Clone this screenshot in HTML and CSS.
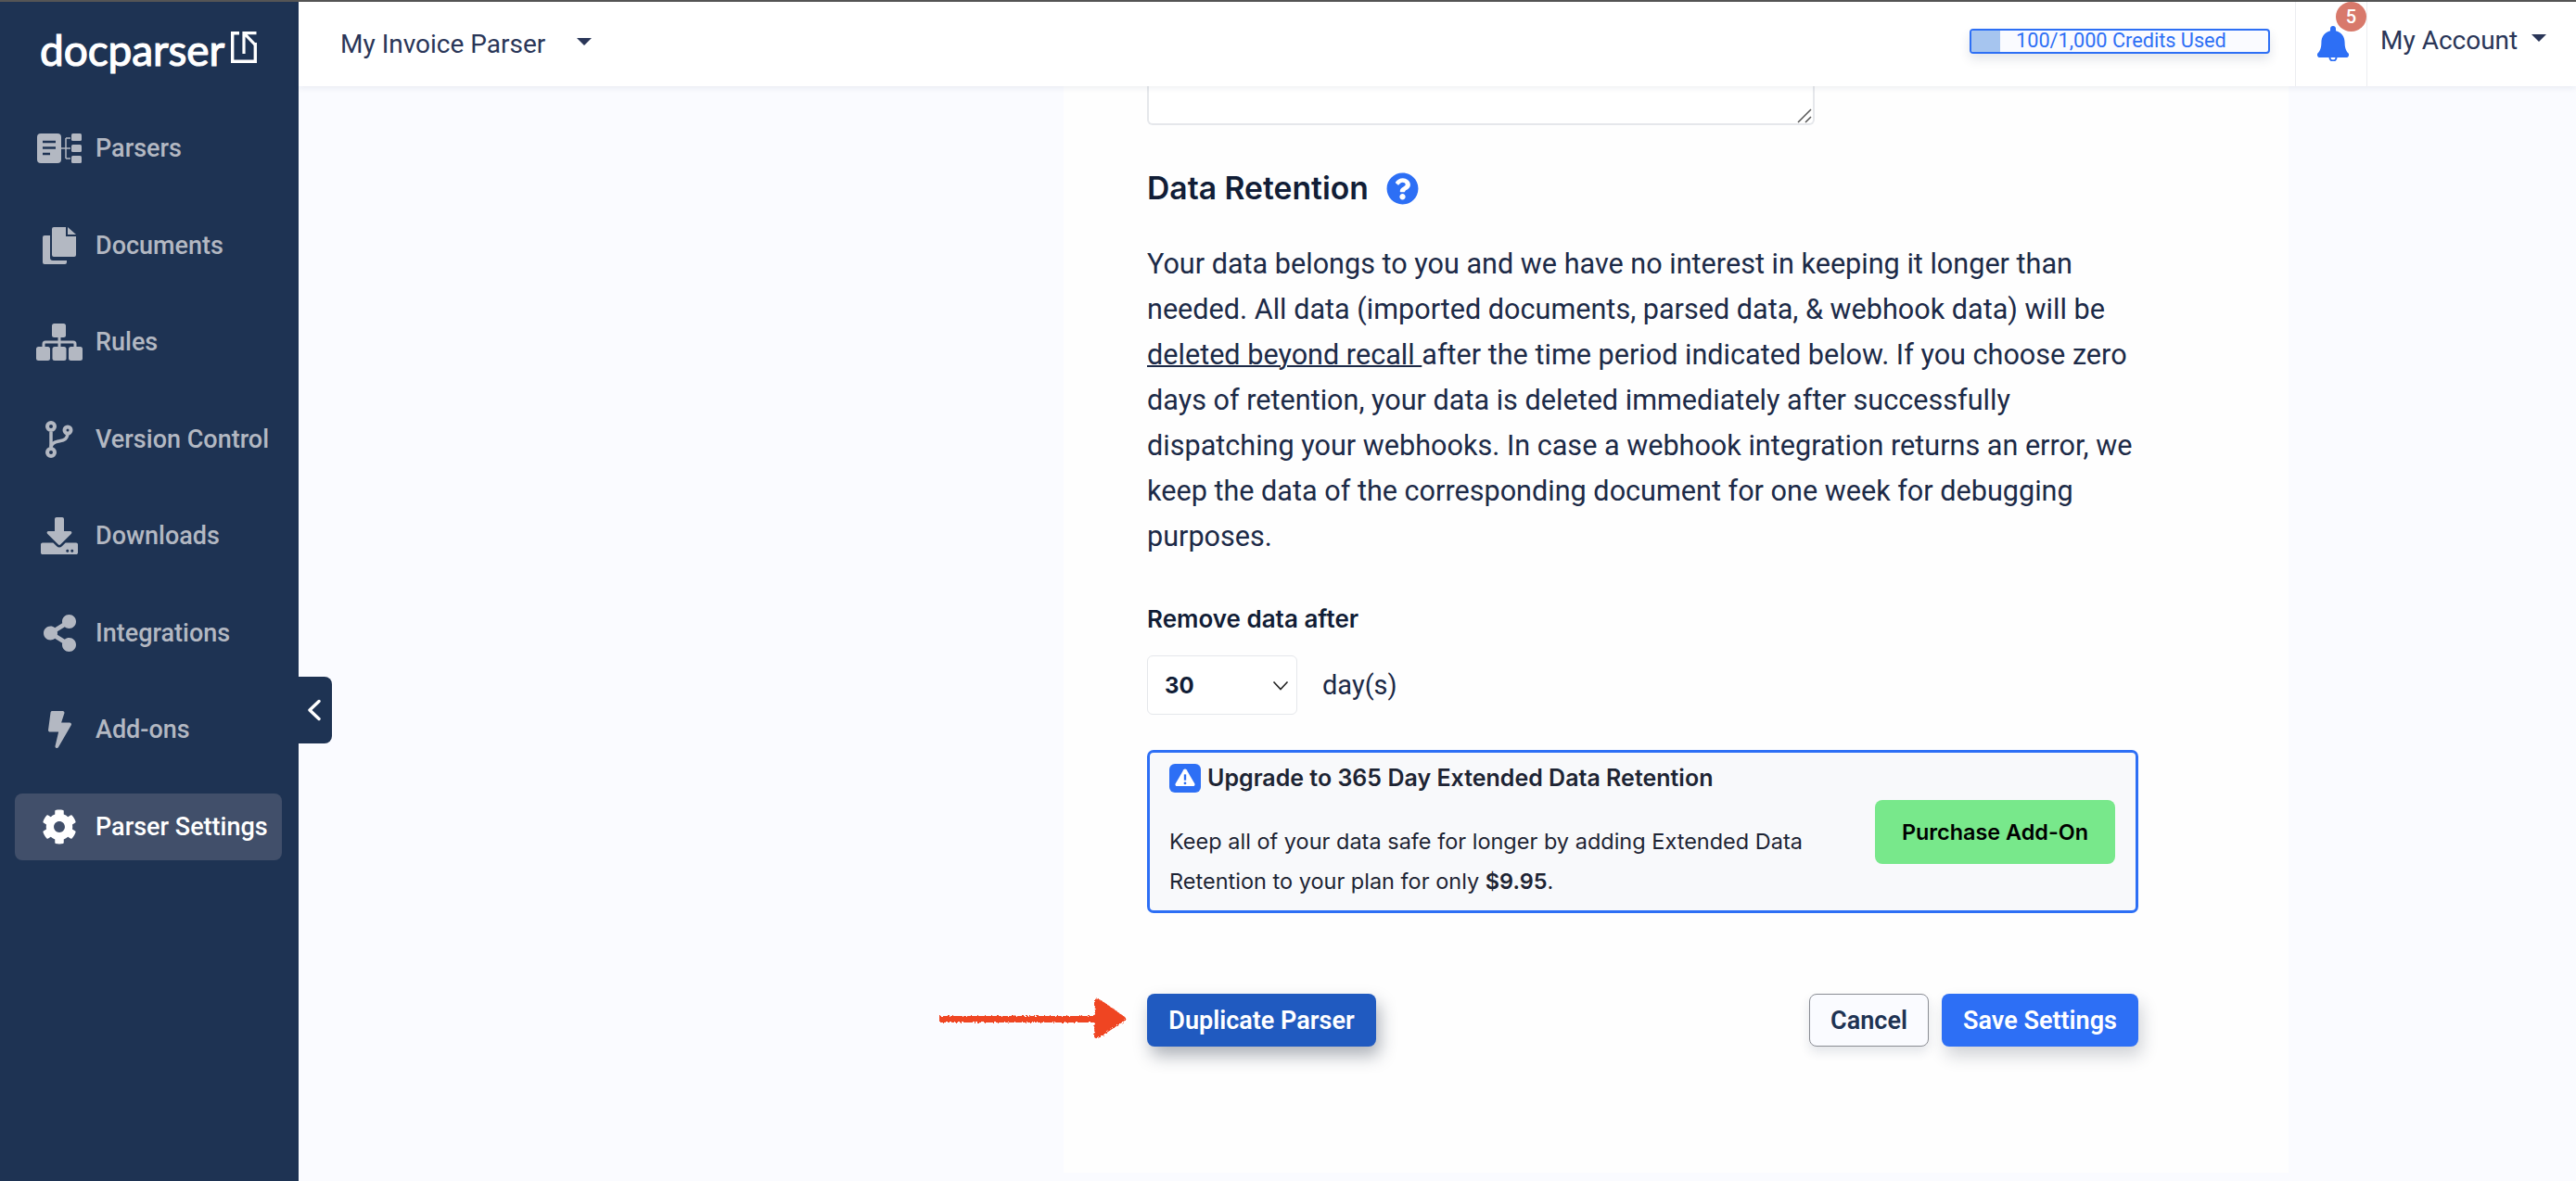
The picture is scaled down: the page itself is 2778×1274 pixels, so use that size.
FILE: index.html
```html
<!DOCTYPE html>
<html lang="en">
<head>
<meta charset="utf-8">
<title>Docparser - Parser Settings</title>
<link rel="stylesheet" href="styles.css">
</head>
<body>
<div class="app">
  <aside class="sidebar">
    <div class="logo">
      <span class="logo-text">docparser</span>
      <svg class="logo-mark" viewBox="0 0 28 34" width="28" height="34"><path d="M9 1.700H1.700v30.600h24.600V12" fill="none" stroke="#fff" stroke-width="3.400"/><path d="M14 24V1.700H27.500M14 1.700 26.800 15" fill="none" stroke="#fff" stroke-width="3.200"/></svg>
    </div>
    <nav class="nav">
      <a class="nav-item"><span class="nav-icon"><svg viewBox="0 0 48 32" width="48" height="32"><rect width="26" height="32" rx="4" fill="currentColor"/><path d="M6 9h14M6 15.500h14M6 22h8" stroke="#1e3353" stroke-width="2.600"/><path d="M26 16h5M31 5v22M31 5h5M31 16h5M31 27h5" stroke="currentColor" stroke-width="1.500" fill="none"/><rect x="37" width="11" height="8" rx="1.500" fill="currentColor"/><rect x="37" y="12" width="11" height="8" rx="1.500" fill="currentColor"/><rect x="37" y="24" width="11" height="8" rx="1.500" fill="currentColor"/></svg></span><span>Parsers</span></a>
      <a class="nav-item"><span class="nav-icon"><svg viewBox="0 0 36 40" width="36" height="40"><path d="M12 0h13v10h11v20a2 2 0 0 1-2 2H12a2 2 0 0 1-2-2V2a2 2 0 0 1 2-2zM27 0l9 8h-9z" fill="currentColor"/><path d="M8 9v24a3 3 0 0 0 3 3h15v2a2 2 0 0 1-2 2H2a2 2 0 0 1-2-2V11a2 2 0 0 1 2-2z" fill="currentColor"/></svg></span><span>Documents</span></a>
      <a class="nav-item"><span class="nav-icon"><svg viewBox="0 0 50 40" width="50" height="40"><rect x="17" width="15" height="15" rx="2.500" fill="currentColor"/><rect y="25" width="15" height="15" rx="2.500" fill="currentColor"/><rect x="17.500" y="25" width="15" height="15" rx="2.500" fill="currentColor"/><rect x="35" y="25" width="15" height="15" rx="2.500" fill="currentColor"/><path d="M25 15v10M8 25v-3a2 2 0 0 1 2-2h30a2 2 0 0 1 2 2v3" fill="none" stroke="currentColor" stroke-width="3"/></svg></span><span>Rules</span></a>
      <a class="nav-item"><span class="nav-icon"><svg viewBox="0 0 30 40" width="30" height="40"><path d="M6 12v16" stroke="currentColor" stroke-width="3.500"/><path d="M24 12c0 9-5 9-10 10-5 1-8 3-8 7" fill="none" stroke="currentColor" stroke-width="3.500"/><circle cx="6" cy="6" r="4" fill="#1e3353" stroke="currentColor" stroke-width="4"/><circle cx="24" cy="10" r="3.500" fill="#1e3353" stroke="currentColor" stroke-width="4"/><circle cx="6" cy="34" r="4" fill="#1e3353" stroke="currentColor" stroke-width="4"/></svg></span><span>Version Control</span></a>
      <a class="nav-item"><span class="nav-icon"><svg viewBox="0 0 512 512" width="40" height="40"><path fill="currentColor" d="M216 0h80c13.300 0 24 10.700 24 24v168h87.700c17.800 0 26.700 21.500 14.100 34.100L269.700 378.300c-7.500 7.500-19.800 7.500-27.300 0L90.100 226.100c-12.600-12.600-3.700-34.100 14.100-34.100H192V24c0-13.300 10.700-24 24-24zm296 376v112c0 13.300-10.700 24-24 24H24c-13.300 0-24-10.700-24-24V376c0-13.300 10.700-24 24-24h146.700l49 49c20.100 20.100 52.500 20.100 72.600 0l49-49H488c13.300 0 24 10.700 24 24zm-124 88c0-11-9-20-20-20s-20 9-20 20 9 20 20 20 20-9 20-20zm64 0c0-11-9-20-20-20s-20 9-20 20 9 20 20 20 20-9 20-20z"/></svg></span><span>Downloads</span></a>
      <a class="nav-item"><span class="nav-icon"><svg viewBox="0 0 448 512" width="35" height="40"><path fill="currentColor" d="M352 320c-22.608 0-43.387 7.819-59.790 20.895l-102.486-64.054a96.551 96.551 0 0 0 0-41.683l102.486-64.054C308.613 184.181 329.392 192 352 192c53.019 0 96-42.981 96-96S405.019 0 352 0s-96 42.981-96 96c0 7.158.79 14.130 2.276 20.841L155.790 180.895C139.387 167.819 118.608 160 96 160c-53.019 0-96 42.981-96 96s42.981 96 96 96c22.608 0 43.387-7.819 59.790-20.895l102.486 64.054A96.301 96.301 0 0 0 256 416c0 53.019 42.981 96 96 96s96-42.981 96-96-42.981-96-96-96z"/></svg></span><span>Integrations</span></a>
      <a class="nav-item"><span class="nav-icon"><svg viewBox="0 0 320 512" width="25" height="40"><path fill="currentColor" d="M296 160H180.600l42.600-129.800C227.200 15 215.700 0 200 0H56C44 0 33.800 8.900 32.200 20.800l-32 240C-1.700 275.200 9.500 288 24 288h118.700L96.600 482.500c-3.600 15.200 8 29.500 23.300 29.500 8.400 0 16.400-4.400 20.800-12l176-304c9.300-15.900-2.200-36-20.700-36z"/></svg></span><span>Add-ons</span></a>
      <a class="nav-item active"><span class="nav-icon"><svg viewBox="0 0 512 512" width="38" height="38"><path fill="currentColor" d="M487.400 315.700l-42.600-24.600c4.300-23.200 4.300-47 0-70.200l42.600-24.600c4.900-2.800 7.100-8.600 5.500-14-11.100-35.600-30-67.800-54.700-94.600-3.800-4.100-10-5.100-14.800-2.300L380.800 110c-17.900-15.400-38.500-27.300-60.800-35.100V25.800c0-5.600-3.900-10.500-9.400-11.700-36.700-8.200-74.300-7.800-109.200 0-5.500 1.200-9.400 6.100-9.400 11.700V75c-22.200 7.900-42.800 19.800-60.800 35.100L88.700 85.500c-4.900-2.800-11-1.900-14.800 2.300-24.700 26.700-43.600 58.900-54.700 94.600-1.700 5.400.6 11.200 5.500 14L67.300 221c-4.300 23.200-4.300 47 0 70.200l-42.600 24.600c-4.900 2.800-7.100 8.600-5.500 14 11.100 35.600 30 67.800 54.700 94.600 3.800 4.100 10 5.100 14.800 2.300l42.600-24.600c17.900 15.400 38.500 27.300 60.800 35.100v49.200c0 5.600 3.900 10.500 9.400 11.700 36.700 8.200 74.300 7.800 109.200 0 5.500-1.200 9.400-6.100 9.400-11.700v-49.200c22.200-7.900 42.800-19.800 60.800-35.100l42.600 24.600c4.900 2.800 11 1.900 14.800-2.300 24.700-26.700 43.600-58.900 54.700-94.600 1.500-5.500-.7-11.300-5.600-14.100zM256 336c-44.100 0-80-35.900-80-80s35.900-80 80-80 80 35.900 80 80-35.900 80-80 80z"/></svg></span><span>Parser Settings</span></a>
    </nav>
    <button class="collapse-tab" type="button" aria-label="Collapse sidebar"><svg viewBox="0 0 16 24" width="16" height="24"><path d="M13 2.500 3 12l10 9.500" fill="none" stroke="#fff" stroke-width="3.400" stroke-linecap="round" stroke-linejoin="round"/></svg></button>
  </aside>
  <div class="main">
    <header class="topbar">
      <div class="parser-picker"><span>My Invoice Parser</span><i class="caret"></i></div>
      <div class="credits"><div class="credits-fill"></div><span class="credits-label">100/1,000 Credits Used</span></div>
      <div class="bell-cell">
        <svg class="bell" viewBox="0 0 34 38" width="34" height="38"><path fill="#2d6ff5" d="M17 0c1.800 0 3 1.300 3 3v2.200c6 1.300 9.600 6.300 9.600 12.800 0 7.500 2.600 10 4 11.600.5.600.4 1.400.4 1.800 0 1.500-1.200 2.600-2.800 2.600H2.800C1.200 34 0 32.900 0 31.400c0-.4-.1-1.200.4-1.800 1.400-1.600 4-4.100 4-11.600 0-6.500 3.600-11.500 9.600-12.800V3c0-1.700 1.200-3 3-3z"/><path fill="none" stroke="#2d6ff5" stroke-width="2" d="M13.500 34a3.500 3.500 0 0 0 7 0"/></svg>
        <span class="badge">5</span>
      </div>
      <div class="account"><span>My Account</span><i class="caret"></i></div>
    </header>
    <div class="content">
      <section class="card">
        <div class="notes-wrap">
          <textarea class="notes" aria-label="Notes"></textarea>
          <svg class="resize-grip" viewBox="0 0 16 16" width="16" height="16"><path d="M1 15 15 1M9 15l6-6" stroke="#555" stroke-width="1.500"/></svg>
        </div>
        <h2 class="section-title">Data Retention
          <svg class="help" viewBox="0 0 512 512" width="35" height="35"><path fill="#2d6ff5" d="M504 256c0 136.997-111.043 248-248 248S8 392.997 8 256C8 119.083 119.043 8 256 8s248 111.083 248 248zM262.655 90c-54.497 0-89.255 22.957-116.549 63.758-3.536 5.286-2.353 12.415 2.715 16.258l34.699 26.310c5.205 3.947 12.621 3.008 16.665-2.122 17.864-22.658 30.113-35.797 57.303-35.797 20.429 0 45.698 13.148 45.698 32.958 0 14.976-12.363 22.667-32.534 33.976C247.128 238.528 216 254.941 216 296v4c0 6.627 5.373 12 12 12h56c6.627 0 12-5.373 12-12v-1.333c0-28.462 83.186-29.647 83.186-106.667 0-58.002-60.165-102-116.531-102zM256 338c-25.365 0-46 20.635-46 46 0 25.364 20.635 46 46 46s46-20.636 46-46c0-25.365-20.635-46-46-46z"/></svg>
        </h2>
        <p class="prose">Your data belongs to you and we have no interest in keeping it longer than needed. All data (imported documents, parsed data, &amp; webhook data) will be <u>deleted beyond recall </u>after the time period indicated below. If you choose zero days of retention, your data is deleted immediately after successfully dispatching your webhooks. In case a webhook integration returns an error, we keep the data of the corresponding document for one week for debugging purposes.</p>
        <label class="field-label">Remove data after</label>
        <div class="retention-row">
          <div class="select"><span>30</span><svg viewBox="0 0 18 11" width="18" height="11"><path d="M1.500 1.500 9 9.500l7.500-8" fill="none" stroke="#222" stroke-width="1.600"/></svg></div>
          <span class="unit">day(s)</span>
        </div>
        <div class="upsell">
          <div class="upsell-copy">
            <div class="upsell-title"><span class="warn"><svg viewBox="0 0 24 22" width="22" height="20"><path fill="#fff" d="M10.300 1.500a2 2 0 0 1 3.400 0l9.600 16.500a2 2 0 0 1-1.700 3H2.400a2 2 0 0 1-1.700-3z"/><path d="M12 7v7" stroke="#2d6ff5" stroke-width="2.600"/><circle cx="12" cy="17.500" r="1.500" fill="#2d6ff5"/></svg></span>Upgrade to 365 Day Extended Data Retention</div>
            <p class="upsell-text">Keep all of your data safe for longer by adding Extended Data Retention to your plan for only <b>$9.95</b>.</p>
          </div>
          <button class="btn btn-green" type="button">Purchase Add-On</button>
        </div>
        <div class="actions">
          <button class="btn btn-dark" type="button">Duplicate Parser</button>
          <div class="actions-right">
            <button class="btn btn-cancel" type="button">Cancel</button>
            <button class="btn btn-blue" type="button">Save Settings</button>
          </div>
        </div>
      </section>
    </div>
  </div>
</div>
<svg class="red-arrow" viewBox="0 0 206 50" width="206" height="50">
  <defs><filter id="rough" x="-5%" y="-20%" width="110%" height="140%"><feTurbulence type="fractalNoise" baseFrequency="0.55" numOctaves="2" seed="4"/><feDisplacementMap in="SourceGraphic" scale="4"/></filter></defs>
  <g filter="url(#rough)" fill="#ef4423"><path d="M2 21h176v7H2z"/><path d="M170 3c2-1 5 0 8 2l24 17c2 1 2 3 0 4l-27 18c-3 2-6 1-6-1z"/></g>
</svg>
</body>
</html>
```
FILE: styles.css
```css
* { box-sizing: border-box; }
html, body { margin: 0; height: 100%; }
body {
  overflow: hidden;
  background: #fafbff;
  border-top: 2px solid #555;
  font-family: Roboto, "Liberation Sans", sans-serif;
  color: #1c2a47;
  position: relative;
}
.app { display: flex; height: 1272px; }

/* Sidebar */
.sidebar {
  position: relative;
  flex: 0 0 322px;
  background: #1e3353;
  color: #b3b8c2;
}
.logo {
  height: 91px;
  padding: 29px 0 0 43px;
  display: flex;
  align-items: flex-start;
  gap: 7px;
  color: #fff;
}
.logo-text {
  font-family: Lato, sans-serif;
  font-size: 46px;
  line-height: 46px;
  letter-spacing: -0.1px;
  font-weight: 400;
  -webkit-text-stroke: 1.2px #fff;
}
.logo-mark { margin-top: 3px; }
.nav {
  display: flex;
  flex-direction: column;
  gap: 32.5px;
  padding: 31px 18px 0 16px;
}
.nav-item {
  height: 72px;
  display: flex;
  align-items: center;
  gap: 15px;
  padding-left: 24px;
  border-radius: 8px;
  font-size: 27px;
  font-weight: 500;
  white-space: nowrap;
}
.nav-icon { flex: 0 0 48px; width: 48px; min-width: 0; display: flex; justify-content: center; }
.nav-icon svg { display: block; flex: none; }
.nav-item.active { background: #414f6a; color: #fff; }
.collapse-tab {
  position: absolute;
  left: 322px;
  top: 728px;
  width: 36px;
  height: 72px;
  border: 0;
  border-radius: 0 8px 8px 0;
  background: #1e3353;
  display: flex;
  align-items: center;
  justify-content: flex-start;
  padding: 0 0 0 9px;
}

/* Top bar */
.main { flex: 1; min-width: 0; display: flex; flex-direction: column; }
.topbar {
  flex: 0 0 91px;
  position: relative;
  z-index: 2;
  display: flex;
  align-items: stretch;
  background: #fff;
  box-shadow: 0 2px 6px rgba(30, 51, 83, 0.08);
  color: #2a3658;
  font-size: 28px;
}
.caret {
  display: inline-block;
  width: 0;
  height: 0;
  border-left: 8px solid transparent;
  border-right: 8px solid transparent;
  border-top: 8px solid #2a3658;
  margin-bottom: 5px;
}
.parser-picker {
  display: flex;
  align-items: center;
  gap: 34px;
  padding: 0 0 0 45px;
  height: 91px;
  flex: 1;
}
.credits {
  position: relative;
  align-self: flex-start;
  margin: 29px 27px 0 0;
  width: 324px;
  height: 27px;
  padding-bottom: 2px;
  border: 2px solid #2d6ff5;
  border-radius: 4px;
  background: #fafbff;
  box-shadow: 0 6px 12px rgba(30, 51, 83, 0.12);
  display: flex;
  align-items: center;
  overflow: hidden;
  color: #2d6ff5;
  font-size: 21.7px;
}
.credits-fill { position: absolute; left: 0; top: 0; bottom: 0; width: 31px; background: #a6c5ef; }
.credits-label { position: relative; margin-left: 48px; white-space: nowrap; }
.bell-cell {
  position: relative;
  width: 78px;
  border-left: 1px solid #ecedf0;
  border-right: 1px solid #ecedf0;
}
.bell { position: absolute; left: 23px; top: 26px; }
.badge {
  position: absolute;
  left: 43px;
  top: 0;
  width: 33px;
  height: 32px;
  border-radius: 50%;
  background: #d8796b;
  color: #fff;
  font-size: 20px;
  font-weight: 500;
  line-height: 32px;
  text-align: center;
}
.account {
  width: 225px;
  padding: 0 0 8px 14px;
  display: flex;
  align-items: center;
  gap: 15px;
}

/* Content */
.content { flex: 1; padding: 0 0 9px 825px; display: flex; min-height: 0; }
.card {
  width: 1321px;
  height: 100%;
  padding: 0 162px 0 90px;
  background: #fefefe;
}
.notes-wrap { position: relative; width: 720px; }
.notes {
  display: block;
  width: 720px;
  height: 42px;
  padding: 0;
  border: 2px solid #e5e7eb;
  border-top: 0;
  border-radius: 0 0 6px 6px;
  background: #fff;
  resize: none;
}
.resize-grip { position: absolute; right: 3px; bottom: 2px; }
.section-title {
  margin: 49px 0 0;
  display: flex;
  align-items: center;
  gap: 19px;
  font-family: Inter, sans-serif;
  font-size: 33.7px;
  line-height: 38px;
  font-weight: 600;
  color: #111d36;
}
.prose {
  margin: 38px 0 0;
  font-size: 30.6px;
  line-height: 49px;
}
.prose u { text-decoration-thickness: 2px; }
.field-label {
  display: block;
  margin-top: 49px;
  font-family: Inter, sans-serif;
  font-size: 26px;
  line-height: 32px;
  font-weight: 600;
  color: #111d36;
}
.retention-row { margin-top: 23px; display: flex; align-items: center; gap: 27px; }
.select {
  width: 162px;
  height: 64px;
  padding: 0 8px 0 18px;
  border: 1px solid #e5e7eb;
  border-radius: 6px;
  background: #fff;
  display: flex;
  align-items: center;
  justify-content: space-between;
  font-family: Inter, sans-serif;
  font-size: 24px;
  font-weight: 700;
  color: #111d36;
}
.unit { font-size: 29px; }
.upsell {
  margin-top: 38px;
  height: 176px;
  padding: 0 22px 0 21px;
  border: 3px solid #2d6ff5;
  border-radius: 7px;
  background: #f8f9fb;
  display: flex;
  align-items: center;
  justify-content: space-between;
}
.upsell-copy { width: 700px; align-self: flex-start; }
.upsell-title {
  margin-top: 11px;
  display: flex;
  align-items: center;
  gap: 7px;
  font-family: Inter, sans-serif;
  font-size: 25px;
  line-height: 32px;
  font-weight: 600;
  color: #1d2433;
  white-space: nowrap;
}
.warn {
  width: 34px;
  height: 31px;
  border-radius: 6px;
  background: #2d6ff5;
  display: flex;
  align-items: center;
  justify-content: center;
}
.upsell-text {
  margin: 31px 0 0;
  font-family: Inter, sans-serif;
  font-size: 23.5px;
  line-height: 43px;
  color: #1d2433;
}
.upsell-text b { font-weight: 600; }
.btn {
  font-family: Roboto, sans-serif;
  font-size: 27px;
  font-weight: 600;
  height: 57px;
  padding: 0;
  border: 0;
  border-radius: 8px;
  white-space: nowrap;
}
.btn-green { width: 259px; height: 69px; margin-top: 1px; background: #78e88b; color: #000; font-size: 23.4px; font-family: Inter, sans-serif; font-weight: 600; }
.actions { margin-top: 87px; display: flex; justify-content: space-between; }
.actions-right { display: flex; gap: 14px; }
.btn-dark { width: 247px; background: #205ac0; color: #fff; box-shadow: 4px 10px 18px rgba(30, 40, 60, 0.35); }
.btn-cancel { width: 129px; background: #fafbff; border: 1px solid #8a8d94; color: #1e3353; box-shadow: 0 6px 12px rgba(30, 51, 83, 0.12); }
.btn-blue { width: 212px; background: #2d6ff5; color: #fff; box-shadow: 4px 10px 18px rgba(30, 40, 60, 0.2); }

.red-arrow { position: absolute; left: 1011px; top: 1073px; }
```
